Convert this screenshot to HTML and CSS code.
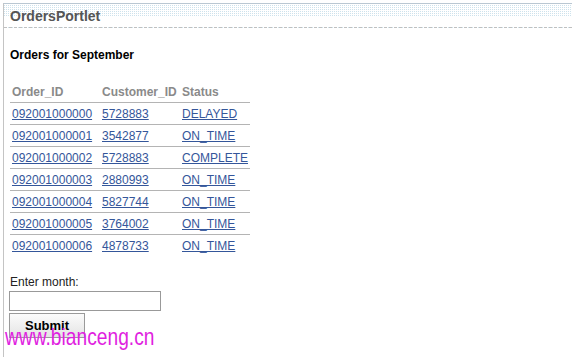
FILE: index.html
```html
<!DOCTYPE html>
<html lang="en">
<head>
    <meta charset="UTF-8">
    <title>OrdersPortlet</title>
    <link rel="stylesheet" href="styles.css">
</head>
<body>

    <!-- Portlet frame -->
    <div class="portlet">
        <div class="portlet-title">OrdersPortlet</div>

        <div class="portlet-body">
            <h3 class="orders-heading">Orders for September</h3>

            <table class="orders">
                <colgroup>
                    <col class="col-order">
                    <col class="col-customer">
                    <col class="col-status">
                </colgroup>
                <tr>
                    <th>Order_ID</th>
                    <th>Customer_ID</th>
                    <th>Status</th>
                </tr>
                <tr>
                    <td><a href="#">092001000000</a></td>
                    <td><a href="#">5728883</a></td>
                    <td><a href="#">DELAYED</a></td>
                </tr>
                <tr>
                    <td><a href="#">092001000001</a></td>
                    <td><a href="#">3542877</a></td>
                    <td><a href="#">ON_TIME</a></td>
                </tr>
                <tr>
                    <td><a href="#">092001000002</a></td>
                    <td><a href="#">5728883</a></td>
                    <td><a href="#">COMPLETE</a></td>
                </tr>
                <tr>
                    <td><a href="#">092001000003</a></td>
                    <td><a href="#">2880993</a></td>
                    <td><a href="#">ON_TIME</a></td>
                </tr>
                <tr>
                    <td><a href="#">092001000004</a></td>
                    <td><a href="#">5827744</a></td>
                    <td><a href="#">ON_TIME</a></td>
                </tr>
                <tr>
                    <td><a href="#">092001000005</a></td>
                    <td><a href="#">3764002</a></td>
                    <td><a href="#">ON_TIME</a></td>
                </tr>
                <tr>
                    <td><a href="#">092001000006</a></td>
                    <td><a href="#">4878733</a></td>
                    <td><a href="#">ON_TIME</a></td>
                </tr>
            </table>

            <form class="month-form" onsubmit="return false;">
                <label for="monthInput">Enter month:</label>
                <input type="text" id="monthInput">
                <button type="submit">Submit</button>
            </form>
        </div>
    </div>

    <!-- Watermark -->
    <div class="watermark">www.bianceng.cn</div>

</body>
</html>
```

FILE: styles.css
```css
body {
    font-family: "Liberation Sans", Arial, sans-serif;
    font-size: 12px;
    background-color: #ffffff;
    margin: 0;
    padding: 0;
    color: #222;
    overflow: hidden;
}

.portlet {
    margin: 3px 0 0 3px;
    border-left: 1px solid #c4c4c4;
    border-top: 1px solid #b9c7d2;
    height: 360px;
}

/* dotted strip on the top half of the title bar */
.portlet-title {
    box-sizing: border-box;
    height: 24px;
    padding: 5px 0 0 6px;
    border-bottom: 1px dashed #c0c0c0;
    font-size: 14px;
    font-weight: bold;
    line-height: 14px;
    color: #555;
    background-color: #ffffff;
    background-image:
        linear-gradient(transparent 12px, #ffffff 12px),
        linear-gradient(#ffffff 1px, transparent 1px),
        linear-gradient(90deg, #cde2ec 1px, #ffffff 1px);
    background-size: 100% 100%, 2px 2px, 2px 2px;
}

.portlet-body {
    padding: 0 0 0 6px;
}

.orders-heading {
    font-size: 12px;
    font-weight: bold;
    color: #000;
    line-height: 14px;
    margin: 20px 0 19px 0;
}

.orders {
    border-collapse: collapse;
    table-layout: fixed;
    width: 240px;
}

.col-order {
    width: 90px;
}

.col-customer {
    width: 80px;
}

.col-status {
    width: 70px;
}

.orders th,
.orders td {
    height: 21px;
    padding: 0 0 0 2px;
    text-align: left;
    vertical-align: middle;
    line-height: 14px;
    white-space: nowrap;
    border-bottom: 1px solid #b4b4b4;
}

.orders th {
    color: #8a8a8a;
    font-weight: bold;
}

.orders tr:last-child td {
    border-bottom: none;
}

.orders a {
    color: #34569a;
}

.month-form {
    margin-top: 19px;
}

.month-form label {
    display: block;
    color: #222;
    line-height: 14px;
}

.month-form input {
    display: block;
    width: 152px;
    height: 20px;
    box-sizing: border-box;
    margin: 2px 0 2px -1px;
    border: 1px solid #999;
    padding: 0 2px;
}

.month-form button {
    display: block;
    width: 76px;
    height: 25px;
    margin-left: -1px;
    border: 1px solid #9a9a9a;
    background: linear-gradient(#fbfbfb, #e4e4e4);
    font-family: "Liberation Sans", Arial, sans-serif;
    font-size: 13px;
    font-weight: bold;
    color: #000;
}

.watermark {
    position: absolute;
    left: 5px;
    top: 325px;
    font-family: "Liberation Sans", Arial, sans-serif;
    font-size: 24px;
    line-height: 24px;
    color: #e01fe0;
    white-space: nowrap;
    transform: scaleX(0.8);
    transform-origin: left top;
}
```
